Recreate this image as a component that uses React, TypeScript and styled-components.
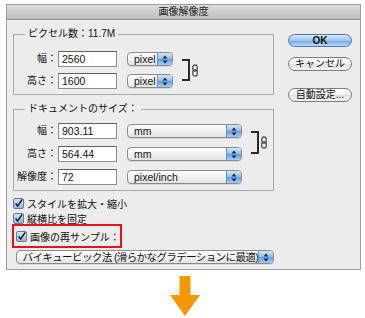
import styled, { createGlobalStyle } from 'styled-components'

const GlobalStyle = createGlobalStyle`
  body {
    margin: 0;
    background: #fff;
    font-family: 'Liberation Sans', 'Noto Sans CJK JP', sans-serif;
    font-size: 10px;
    color: #111;
  }
`

const Page = styled.div`
  padding: 4px 0 0 6px;
  width: 359px;
`

const Dialog = styled.div`
  width: 353px;
  border: 1px solid #9c9c9c;
  background: #ececec;
`

const TitleBar = styled.div`
  height: 14px;
  line-height: 14px;
  text-align: center;
  font-size: 10px;
  color: #1e1e1e;
  background: linear-gradient(#dcdcdc, #bdbdbd);
  border-bottom: 1px solid #8e8e8e;
`

const Body = styled.div`
  display: flex;
  padding: 0 8px 5px 6px;
`

const Main = styled.div`
  width: 261px;
  padding-top: 8px;
  display: flex;
  flex-direction: column;
`

const Side = styled.div`
  margin-left: 14px;
  padding-top: 14px;
  display: flex;
  flex-direction: column;
`

const Group = styled.fieldset<{ $top: number; $gap: number }>`
  margin: ${(p) => (p.$gap ? 8 : 0)}px 0 0;
  padding: ${(p) => p.$top}px 0 5px;
  border: 1px solid #a9a9a9;
  min-width: 0;
`

const Legend = styled.legend`
  margin-left: 11px;
  padding: 0 3px;
  font-size: 10px;
  line-height: 12px;
`

const FieldGrid = styled.div<{ $sel: number; $gap: number }>`
  display: grid;
  grid-template-columns: 44px 69px ${(p) => p.$sel}px 17px 10px;
  grid-auto-rows: 16px;
  row-gap: ${(p) => p.$gap}px;
`

const Label = styled.div`
  padding-right: 1px;
  text-align: right;
  line-height: 16px;
  white-space: nowrap;
`

const TextInput = styled.div`
  width: 59px;
  height: 16px;
  box-sizing: border-box;
  border: 1px solid #8d8d8d;
  border-top-color: #5f5f5f;
  background: #fff;
  padding-left: 3px;
  line-height: 14px;
  font-size: 10.5px;
`

const SelectBox = styled.div`
  align-self: center;
  height: 14px;
  box-sizing: border-box;
  border: 1px solid #8b8b8b;
  border-radius: 4px;
  background: linear-gradient(#ffffff, #f1f1f1 50%, #e2e2e2);
  display: flex;
  overflow: hidden;
  box-shadow: 0 1px 0 rgba(0, 0, 0, 0.08);
`

const SelectText = styled.span<{ $tight?: boolean }>`
  flex: 1;
  padding-left: 6px;
  line-height: 12px;
  font-size: 10.5px;
  letter-spacing: ${(p) => (p.$tight ? '-0.6px' : 'normal')};
  white-space: nowrap;
  overflow: hidden;
`

const Stepper = styled.span`
  width: 14px;
  flex: none;
  border-left: 1px solid #6f8fb8;
  background: linear-gradient(#d4e6f8, #8fbdee 50%, #5d9de3 51%, #a6cdf4);
  display: flex;
  align-items: center;
  justify-content: center;
`

const Bracket = styled.div`
  grid-column: 4;
  grid-row: 1 / 3;
  margin: 8px 0 8px 9px;
  width: 6px;
  border: 2px solid #2a2a2a;
  border-left: none;
`

const Chain = styled.div`
  grid-column: 5;
  grid-row: 1 / 3;
  align-self: center;
  padding-left: 2px;
  display: flex;
`

const Checks = styled.div`
  margin-top: 5px;
  display: flex;
  flex-direction: column;
  align-items: flex-start;
  gap: 1px;
`

const CheckRow = styled.div<{ $hot?: boolean }>`
  display: flex;
  align-items: center;
  gap: 3px;
  height: ${(p) => (p.$hot ? 20 : 14)}px;
  white-space: nowrap;
  ${(p) =>
    p.$hot &&
    `
    margin: -2px 0 0 -1px;
    padding: 0 0 0 2px;
    border: 2px solid #e2141c;
  `}
`

const Box = styled.span`
  width: 11px;
  height: 11px;
  box-sizing: border-box;
  border: 1px solid #6c7b8d;
  border-radius: 2px;
  background: linear-gradient(#cfe2f6, #8fb9e6);
  display: flex;
  align-items: center;
  justify-content: center;
`

const WideSelect = styled(SelectBox)`
  margin: 2px 0 0 2px;
  width: 258px;
`

const Button = styled.div<{ $primary?: boolean; $gap: number }>`
  margin-top: ${(p) => p.$gap}px;
  width: 64px;
  height: ${(p) => (p.$primary ? 13 : 14)}px;
  box-sizing: border-box;
  border-radius: 7px;
  border: 1px solid ${(p) => (p.$primary ? '#4f77ab' : '#7c7c7c')};
  background: ${(p) =>
    p.$primary
      ? 'linear-gradient(#d9eafb, #9cc6f1 50%, #6aa9ea 51%, #b9dafa)'
      : 'linear-gradient(#ffffff, #f2f2f2 50%, #e1e1e1 51%, #f4f4f4)'};
  text-align: center;
  line-height: ${(p) => (p.$primary ? 11 : 12)}px;
  font-size: 10px;
  font-weight: ${(p) => (p.$primary ? 'bold' : 'normal')};
  white-space: nowrap;
`

const ArrowWrap = styled.div`
  padding: 6px 0 0 164px;
  display: flex;
`

function Steps() {
  return (
    <Stepper>
      <svg width="6" height="9" viewBox="0 0 6 9">
        <path d="M3 0.5 L5.5 3.5 H0.5 Z M3 8.5 L5.5 5.5 H0.5 Z" fill="#1d2b3d" />
      </svg>
    </Stepper>
  )
}

function Select({ text }: { text: string }) {
  return (
    <SelectBox>
      <SelectText>{text}</SelectText>
      <Steps />
    </SelectBox>
  )
}

function ChainIcon() {
  return (
    <Chain>
      <svg width="6" height="13" viewBox="0 0 6 13">
        <rect x="0.8" y="0.8" width="4.4" height="6.4" rx="2.2" fill="none" stroke="#444" strokeWidth="1.2" />
        <rect x="0.8" y="5.8" width="4.4" height="6.4" rx="2.2" fill="none" stroke="#444" strokeWidth="1.2" />
      </svg>
    </Chain>
  )
}

function Check({ label, hot }: { label: string; hot?: boolean }) {
  return (
    <CheckRow $hot={hot}>
      <Box>
        <svg width="11" height="11" viewBox="0 0 11 11">
          <path d="M2 5.5 L4.5 8.5 L10 0.5" fill="none" stroke="#1a1a1a" strokeWidth="1.8" />
        </svg>
      </Box>
      <span>{label}</span>
    </CheckRow>
  )
}

export default function App() {
  return (
    <Page>
      <GlobalStyle />
      <Dialog>
        <TitleBar>画像解像度</TitleBar>
        <Body>
          <Main>
            <Group $top={11} $gap={0}>
              <Legend>ピクセル数：11.7M</Legend>
              <FieldGrid $sel={46} $gap={6}>
                <Label>幅：</Label>
                <TextInput>2560</TextInput>
                <Select text="pixel" />
                <Bracket />
                <ChainIcon />
                <Label>高さ：</Label>
                <TextInput>1600</TextInput>
                <Select text="pixel" />
              </FieldGrid>
            </Group>
            <Group $top={8} $gap={1}>
              <Legend>ドキュメントのサイズ：</Legend>
              <FieldGrid $sel={115} $gap={7}>
                <Label>幅：</Label>
                <TextInput>903.11</TextInput>
                <Select text="mm" />
                <Bracket />
                <ChainIcon />
                <Label>高さ：</Label>
                <TextInput>564.44</TextInput>
                <Select text="mm" />
                <Label>解像度：</Label>
                <TextInput>72</TextInput>
                <Select text="pixel/inch" />
              </FieldGrid>
            </Group>
            <Checks>
              <Check label="スタイルを拡大・縮小" />
              <Check label="縦横比を固定" />
              <Check label="画像の再サンプル：" hot />
            </Checks>
            <WideSelect>
              <SelectText $tight>バイキュービック法 (滑らかなグラデーションに最適)</SelectText>
              <Steps />
            </WideSelect>
          </Main>
          <Side>
            <Button $primary $gap={0}>OK</Button>
            <Button $gap={10}>キャンセル</Button>
            <Button $gap={17}>自動設定...</Button>
          </Side>
        </Body>
      </Dialog>
      <ArrowWrap>
        <svg width="30" height="40" viewBox="0 0 30 40">
          <polygon points="9.5,0 20.5,0 20.5,19 30,19 15,40 0,19 9.5,19" fill="#f39800" />
        </svg>
      </ArrowWrap>
    </Page>
  )
}
